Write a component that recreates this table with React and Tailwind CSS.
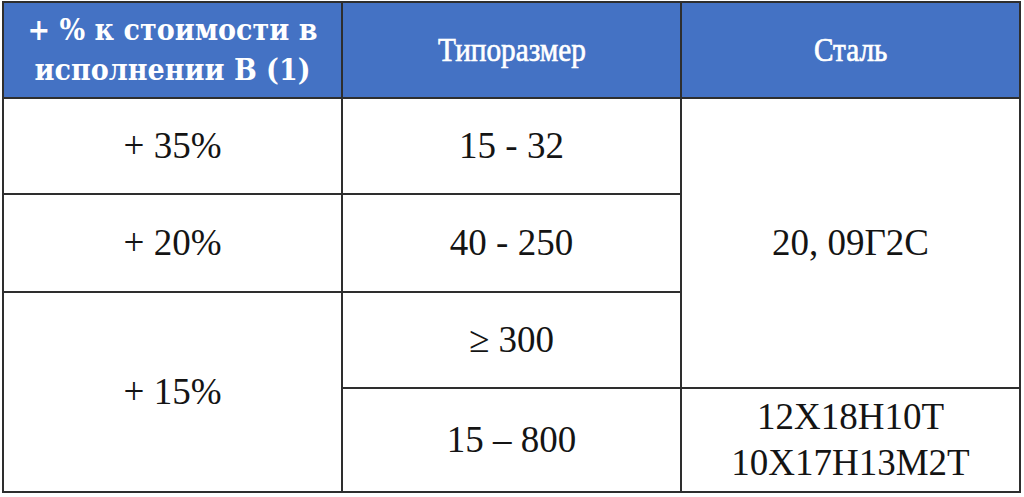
const rows = [
  { pct: '+ 35%', size: '15 - 32' },
  { pct: '+ 20%', size: '40 - 250' },
]

const cell = 'border-2 border-[#2e2e2e] text-center align-middle'
const head = `${cell} bg-[#4472c4] text-white text-[30px] leading-[40px]`
const headText = "font-['DejaVu_Serif_Condensed','DejaVu_Serif',serif] font-stretch-condensed font-bold"
// narrow, Times-like heading in the two right columns
const headNarrow = "inline-block scale-x-[0.86] font-['Liberation_Serif',serif] text-[34px] [-webkit-text-stroke:0.7px_white]"

export default function App() {
  return (
    <div className="w-[1024px] h-[497px] bg-white pt-[1px] pl-[2px] font-['Liberation_Serif',serif]">
      <table className="w-[1019px] table-fixed border-collapse text-[#141414]">
        <colgroup>
          <col className="w-[339px]" />
          <col className="w-[339px]" />
          <col className="w-[339px]" />
        </colgroup>
        <tbody className="text-[37px]">
          <tr className="h-[96px]">
            <td className={head}><span className={headText}>+ % к стоимости в<br />исполнении В (1)</span></td>
            <td className={head}><span className={headNarrow}>Типоразмер</span></td>
            <td className={head}><span className={headNarrow}>Сталь</span></td>
          </tr>
          <tr className="h-[96px]">
            <td className={cell}>{rows[0].pct}</td>
            <td className={cell}>{rows[0].size}</td>
            <td className={cell} rowSpan={3}>20, 09Г2С</td>
          </tr>
          <tr className="h-[98px]">
            <td className={cell}>{rows[1].pct}</td>
            <td className={cell}>{rows[1].size}</td>
          </tr>
          <tr className="h-[96px]">
            <td className={cell} rowSpan={2}>+ 15%</td>
            <td className={cell}>≥ 300</td>
          </tr>
          <tr className="h-[104px]">
            <td className={cell}>15 – 800</td>
            <td className={`${cell} leading-[46px]`}>12Х18Н10Т<br />10Х17Н13М2Т</td>
          </tr>
        </tbody>
      </table>
    </div>
  )
}
